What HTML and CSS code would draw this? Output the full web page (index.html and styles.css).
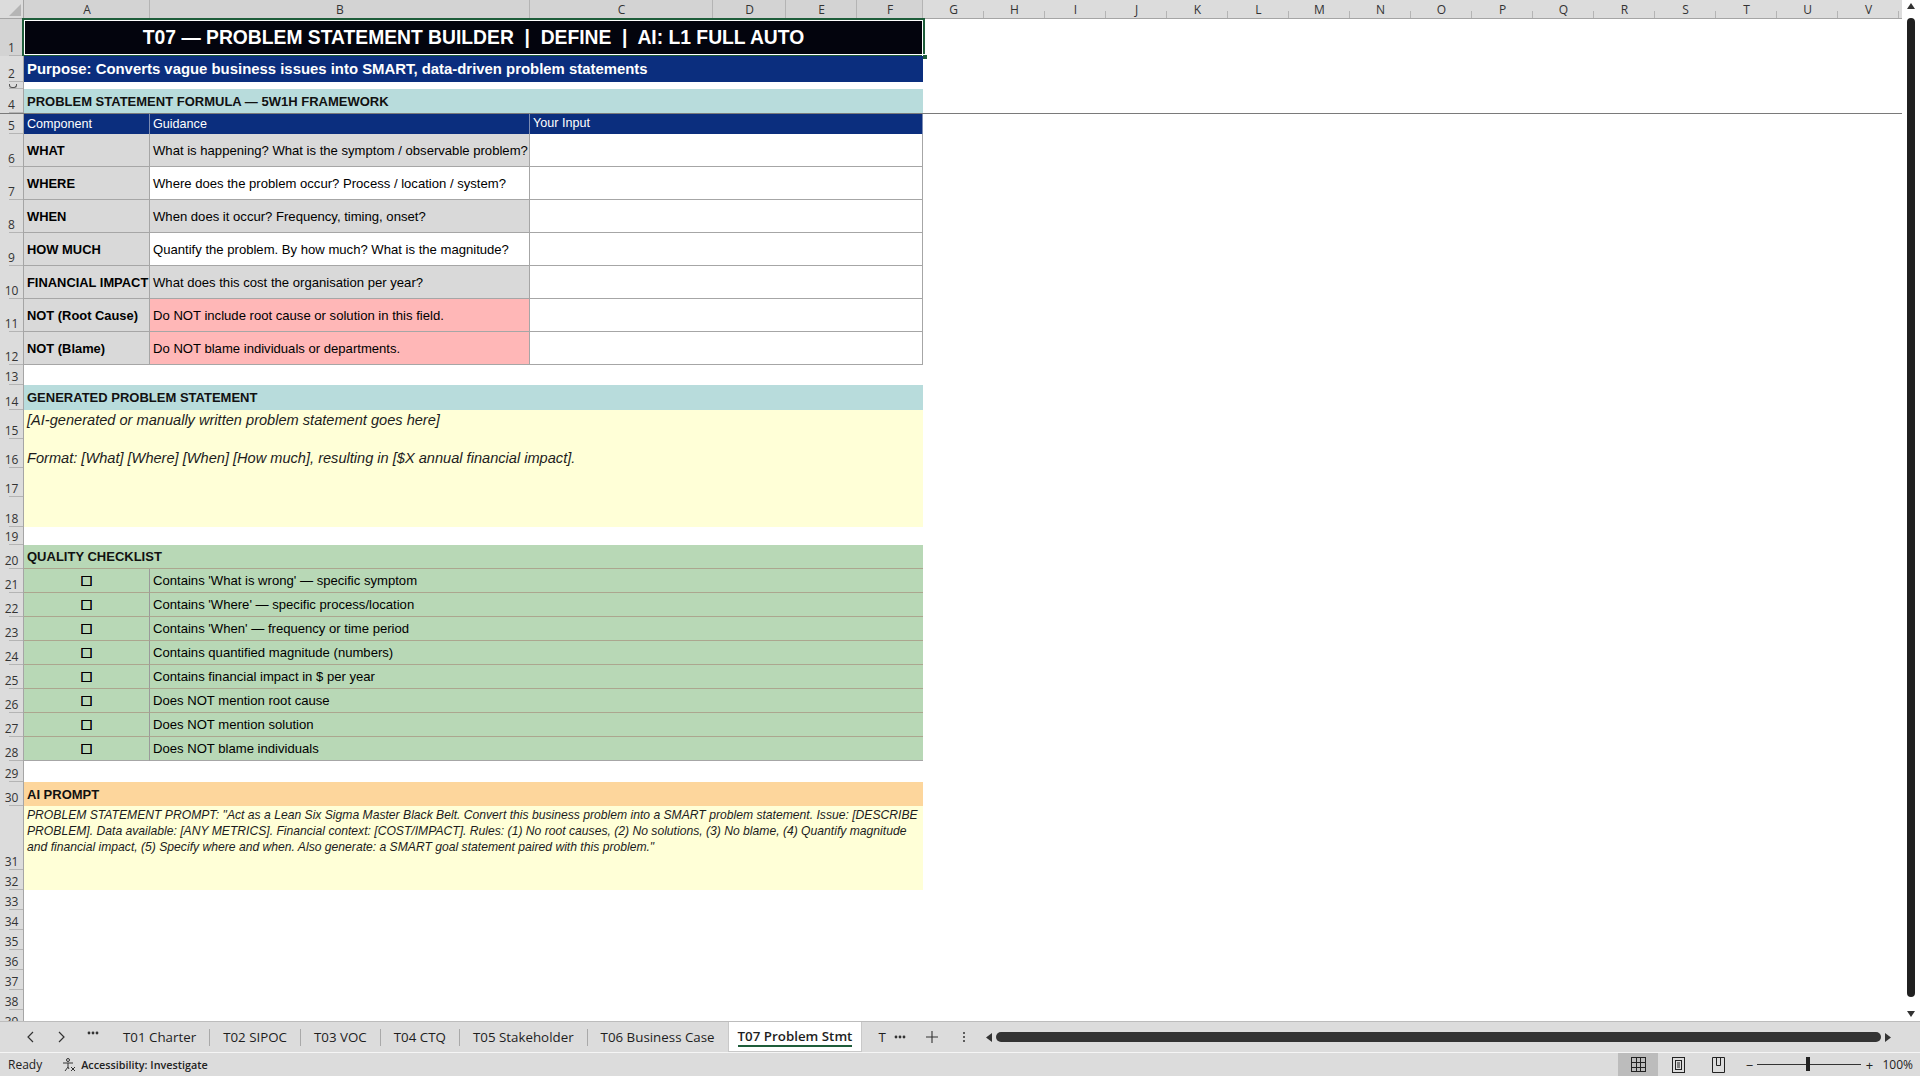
FILE: index.html
```html
<!DOCTYPE html>
<html lang="en">
<head>
  <meta charset="UTF-8" />
  <title>T07 Problem Statement Builder</title>
  <link rel="stylesheet" href="styles.css">
</head>
<body>
  <div class="app">

    <div class="sheet">
      <div class="grid">

        <div class="colheads">
          <div class="corner"><svg width="12" height="12" viewBox="0 0 12 12"><path d="M12 0v12H0z" fill="#b5b5b5"/></svg></div>
          <div class="ch w-a sel">A</div>
          <div class="ch w-b sel">B</div>
          <div class="ch w-c sel">C</div>
          <div class="ch w-d sel">D</div>
          <div class="ch w-e sel">E</div>
          <div class="ch w-f sel">F</div>
          <div class="ch w-n">G</div>
          <div class="ch w-n">H</div>
          <div class="ch w-n">I</div>
          <div class="ch w-n">J</div>
          <div class="ch w-n">K</div>
          <div class="ch w-n">L</div>
          <div class="ch w-n">M</div>
          <div class="ch w-n">N</div>
          <div class="ch w-n">O</div>
          <div class="ch w-n">P</div>
          <div class="ch w-n">Q</div>
          <div class="ch w-n">R</div>
          <div class="ch w-n">S</div>
          <div class="ch w-n">T</div>
          <div class="ch w-n">U</div>
          <div class="ch w-n">V</div>
        </div>

        <div class="row h37 selrow">
          <div class="rh sel">1</div>
          <div class="c w-af title">T07 — PROBLEM STATEMENT BUILDER &nbsp;|&nbsp; DEFINE &nbsp;|&nbsp; AI: L1 FULL AUTO</div>
          <div class="selection"><span class="handle"></span></div>
        </div>
        <div class="row h26">
          <div class="rh">2</div>
          <div class="c w-af purpose">Purpose: Converts vague business issues into SMART, data-driven problem statements</div>
        </div>
        <div class="row h7">
          <div class="rh tiny"></div>
        </div>
        <div class="row h25 freeze">
          <div class="rh">4</div>
          <div class="c w-af sec teal">PROBLEM STATEMENT FORMULA — 5W1H FRAMEWORK</div>
        </div>
        <div class="row h20">
          <div class="rh">5</div>
          <div class="c w-a th">Component</div>
          <div class="c w-b th">Guidance</div>
          <div class="c w-cf th up">Your Input</div>
        </div>

        <div class="row h33">
          <div class="rh">6</div>
          <div class="c w-a bd lbl">WHAT</div>
          <div class="c w-b bd gray">What is happening? What is the symptom / observable problem?</div>
          <div class="c w-cf bd"></div>
        </div>
        <div class="row h33">
          <div class="rh">7</div>
          <div class="c w-a bd lbl">WHERE</div>
          <div class="c w-b bd">Where does the problem occur? Process / location / system?</div>
          <div class="c w-cf bd"></div>
        </div>
        <div class="row h33">
          <div class="rh">8</div>
          <div class="c w-a bd lbl">WHEN</div>
          <div class="c w-b bd gray">When does it occur? Frequency, timing, onset?</div>
          <div class="c w-cf bd"></div>
        </div>
        <div class="row h33">
          <div class="rh">9</div>
          <div class="c w-a bd lbl">HOW MUCH</div>
          <div class="c w-b bd">Quantify the problem. By how much? What is the magnitude?</div>
          <div class="c w-cf bd"></div>
        </div>
        <div class="row h33">
          <div class="rh">10</div>
          <div class="c w-a bd lbl">FINANCIAL IMPACT</div>
          <div class="c w-b bd gray">What does this cost the organisation per year?</div>
          <div class="c w-cf bd"></div>
        </div>
        <div class="row h33">
          <div class="rh">11</div>
          <div class="c w-a bd lbl">NOT (Root Cause)</div>
          <div class="c w-b bd pink">Do NOT include root cause or solution in this field.</div>
          <div class="c w-cf bd"></div>
        </div>
        <div class="row h33">
          <div class="rh">12</div>
          <div class="c w-a bd lbl">NOT (Blame)</div>
          <div class="c w-b bd pink">Do NOT blame individuals or departments.</div>
          <div class="c w-cf bd"></div>
        </div>

        <div class="row h20">
          <div class="rh">13</div>
        </div>
        <div class="row h25">
          <div class="rh">14</div>
          <div class="c w-af sec teal">GENERATED PROBLEM STATEMENT</div>
        </div>
        <div class="block">
          <div class="rhs">
            <div class="rh h29">15</div>
            <div class="rh h29">16</div>
            <div class="rh h29">17</div>
            <div class="rh h30">18</div>
          </div>
          <div class="c w-af note">
            <div>[AI-generated or manually written problem statement goes here]</div>
            <div>&nbsp;</div>
            <div>Format: [What] [Where] [When] [How much], resulting in [$X annual financial impact].</div>
          </div>
        </div>
        <div class="row h18">
          <div class="rh">19</div>
        </div>

        <div class="row h24">
          <div class="rh">20</div>
          <div class="c w-af sec green chk">QUALITY CHECKLIST</div>
        </div>
        <div class="row h24">
          <div class="rh">21</div>
          <div class="c w-a green chk box">☐</div>
          <div class="c w-bf green chk">Contains 'What is wrong' — specific symptom</div>
        </div>
        <div class="row h24">
          <div class="rh">22</div>
          <div class="c w-a green chk box">☐</div>
          <div class="c w-bf green chk">Contains 'Where' — specific process/location</div>
        </div>
        <div class="row h24">
          <div class="rh">23</div>
          <div class="c w-a green chk box">☐</div>
          <div class="c w-bf green chk">Contains 'When' — frequency or time period</div>
        </div>
        <div class="row h24">
          <div class="rh">24</div>
          <div class="c w-a green chk box">☐</div>
          <div class="c w-bf green chk">Contains quantified magnitude (numbers)</div>
        </div>
        <div class="row h24">
          <div class="rh">25</div>
          <div class="c w-a green chk box">☐</div>
          <div class="c w-bf green chk">Contains financial impact in $ per year</div>
        </div>
        <div class="row h24">
          <div class="rh">26</div>
          <div class="c w-a green chk box">☐</div>
          <div class="c w-bf green chk">Does NOT mention root cause</div>
        </div>
        <div class="row h24">
          <div class="rh">27</div>
          <div class="c w-a green chk box">☐</div>
          <div class="c w-bf green chk">Does NOT mention solution</div>
        </div>
        <div class="row h24">
          <div class="rh">28</div>
          <div class="c w-a green chk box last">☐</div>
          <div class="c w-bf green chk last">Does NOT blame individuals</div>
        </div>

        <div class="row h21">
          <div class="rh">29</div>
        </div>
        <div class="row h24">
          <div class="rh">30</div>
          <div class="c w-af sec orange">AI PROMPT</div>
        </div>
        <div class="block">
          <div class="rhs">
            <div class="rh h64">31</div>
            <div class="rh h20">32</div>
          </div>
          <div class="c w-af prompt">PROBLEM STATEMENT PROMPT: "Act as a Lean Six Sigma Master Black Belt. Convert this business problem into a SMART problem statement. Issue: [DESCRIBE<br>PROBLEM]. Data available: [ANY METRICS]. Financial context: [COST/IMPACT]. Rules: (1) No root causes, (2) No solutions, (3) No blame, (4) Quantify magnitude<br>and financial impact, (5) Specify where and when. Also generate: a SMART goal statement paired with this problem."</div>
        </div>

        <div class="row h20"><div class="rh">33</div></div>
        <div class="row h20"><div class="rh">34</div></div>
        <div class="row h20"><div class="rh">35</div></div>
        <div class="row h20"><div class="rh">36</div></div>
        <div class="row h20"><div class="rh">37</div></div>
        <div class="row h20"><div class="rh">38</div></div>
        <div class="row h20"><div class="rh">39</div></div>
      </div>

      <div class="vscroll">
        <svg class="varrow" width="8" height="6" viewBox="0 0 8 6"><path d="M4 0L8 6H0z" fill="#333"/></svg>
        <div class="vthumb"></div>
        <svg class="varrow" width="8" height="6" viewBox="0 0 8 6"><path d="M0 0h8L4 6z" fill="#333"/></svg>
      </div>
    </div>

    <div class="tabbar">
      <div class="tabnav">
        <span class="navbtn"><svg width="7" height="12" viewBox="0 0 7 12"><path d="M6 1L1 6l5 5" fill="none" stroke="#333" stroke-width="1.2"/></svg></span>
        <span class="navbtn"><svg width="7" height="12" viewBox="0 0 7 12"><path d="M1 1l5 5-5 5" fill="none" stroke="#333" stroke-width="1.2"/></svg></span>
        <span class="navbtn"><svg width="12" height="4" viewBox="0 0 12 4"><circle cx="2" cy="2" r="1.4" fill="#333"/><circle cx="6" cy="2" r="1.4" fill="#333"/><circle cx="10" cy="2" r="1.4" fill="#333"/></svg></span>
      </div>
      <div class="tabs">
        <div class="tab">T01 Charter</div>
        <div class="tab">T02 SIPOC</div>
        <div class="tab">T03 VOC</div>
        <div class="tab">T04 CTQ</div>
        <div class="tab">T05 Stakeholder</div>
        <div class="tab">T06 Business Case</div>
        <div class="tab active"><span>T07 Problem Stmt</span></div>
        <div class="tab cut">T</div>
      </div>
      <span class="tabtool more"><svg width="12" height="4" viewBox="0 0 12 4"><circle cx="2" cy="2" r="1.4" fill="#333"/><circle cx="6" cy="2" r="1.4" fill="#333"/><circle cx="10" cy="2" r="1.4" fill="#333"/></svg></span>
      <span class="tabtool plus"><svg width="12" height="12" viewBox="0 0 12 12"><path d="M6 0v12M0 6h12" stroke="#333" stroke-width="1.1"/></svg></span>
      <span class="tabtool kebab"><svg width="4" height="12" viewBox="0 0 4 12"><circle cx="2" cy="2" r="1" fill="#333"/><circle cx="2" cy="6" r="1" fill="#333"/><circle cx="2" cy="10" r="1" fill="#333"/></svg></span>
      <div class="hscroll">
        <svg width="6" height="9" viewBox="0 0 6 9"><path d="M6 0v9L0 4.5z" fill="#333"/></svg>
        <div class="hthumb"></div>
        <svg width="6" height="9" viewBox="0 0 6 9"><path d="M0 0v9l6-4.5z" fill="#333"/></svg>
      </div>
    </div>

    <div class="statusbar">
      <span class="ready">Ready</span>
      <span class="access">
        <svg width="14" height="14" viewBox="0 0 14 14"><circle cx="6" cy="2" r="1.5" fill="none" stroke="#333"/><path d="M1 5h10M6 5v4M6 9l-3 4M6 9l1 2" fill="none" stroke="#333"/><path d="M9 9l4 4M13 9l-4 4" stroke="#333"/></svg>
        Accessibility: Investigate
      </span>
      <div class="views">
        <span class="viewbtn on"><svg width="15" height="15" viewBox="0 0 15 15"><rect x="0.5" y="0.5" width="14" height="14" fill="none" stroke="#222"/><path d="M0 5.5h15M0 10.5h15M5.5 0v15M9.5 0v15" stroke="#222"/></svg></span>
        <span class="viewbtn"><svg width="13" height="16" viewBox="0 0 13 16"><rect x="0.5" y="0.5" width="12" height="15" fill="none" stroke="#222"/><rect x="3.5" y="3.5" width="6" height="9" fill="none" stroke="#222"/><path d="M5 6h3M5 8h3M5 10h3" stroke="#222"/></svg></span>
        <span class="viewbtn"><svg width="13" height="16" viewBox="0 0 13 16"><path d="M0.5 0.5h12v15H0.5z" fill="none" stroke="#222"/><path d="M4.5 0.5v8h4v-8" fill="none" stroke="#222"/></svg></span>
      </div>
      <div class="zoomer">
        <span class="zsign">−</span>
        <div class="slider"><span class="knob"></span></div>
        <span class="zsign">+</span>
        <span class="pct">100%</span>
      </div>
    </div>

  </div>
</body>
</html>
```

FILE: styles.css
```css
* {
  box-sizing: border-box;
}

body {
  margin: 0;
  font-family: "Liberation Sans", Arial, sans-serif;
  font-size: 13.1px;
  color: #000;
  background: #fff;
  overflow: hidden;
}

.app {
  display: flex;
  flex-direction: column;
  width: 1920px;
  height: 1076px;
}

/* ---------- sheet ---------- */

.sheet {
  display: flex;
  height: 1022px;
  flex: none;
  overflow: hidden;
  border-bottom: 1px solid #bcbcbc;
}

.grid {
  width: 1902px;
  flex: none;
  overflow: hidden;
}

.colheads {
  display: flex;
  height: 19px;
  background: #dcdcdc;
  border-bottom: 1px solid #a5a5a5;
  font-family: "Open Sans", sans-serif;
  font-size: 12px;
  color: #333;
}

.corner {
  width: 24px;
  flex: none;
  display: flex;
  align-items: flex-end;
  justify-content: flex-end;
  padding: 0 2px 2px 0;
  border-right: 1px solid #a5a5a5;
}

.ch {
  flex: none;
  display: flex;
  align-items: center;
  justify-content: center;
  position: relative;
}

.ch::after {
  content: "";
  position: absolute;
  right: 0;
  bottom: 0;
  height: 7px;
  border-right: 1px solid #b4b4b4;
}

.ch.sel {
  background: #d3d3d3;
}

.ch.sel::after {
  height: 100%;
}

.w-a { width: 126px; }
.w-b { width: 380px; }
.w-c { width: 183px; }
.w-d { width: 73px; }
.w-e { width: 71px; }
.w-f { width: 66px; }
.w-n { width: 61px; }
.w-cf { width: 393px; }
.w-bf { width: 773px; }
.w-af { width: 899px; }

.row {
  display: flex;
  position: relative;
}

.h7 { height: 7px; }
.h18 { height: 18px; }
.h20 { height: 20px; }
.h21 { height: 21px; }
.h24 { height: 24px; }
.h25 { height: 25px; }
.h26 { height: 26px; }
.h29 { height: 29px; }
.h30 { height: 30px; }
.h33 { height: 33px; }
.h37 { height: 37px; }
.h64 { height: 64px; }

.rh {
  width: 24px;
  flex: none;
  position: relative;
  overflow: hidden;
  display: flex;
  align-items: flex-end;
  justify-content: center;
  padding-bottom: 1px;
  background: #dcdcdc;
  border-right: 1px solid #a5a5a5;
  font-family: "Open Sans", sans-serif;
  font-size: 12px;
  line-height: 15px;
  color: #333;
}

.rh::after {
  content: "";
  position: absolute;
  left: 9px;
  right: 0;
  bottom: 0;
  border-bottom: 1px solid #b4b4b4;
}

/* row 3 is too short to show its number: just the top of the digit */
.rh.tiny::before {
  content: "";
  position: absolute;
  left: 9px;
  top: 2px;
  width: 6px;
  height: 3px;
  border: 1px solid #555;
  border-top: none;
  border-radius: 0 0 3px 3px;
}

.rh.sel {
  background: #d3d3d3;
}

.freeze {
  border-bottom: 1px solid #7a7a7a;
}

/* ---------- cells ---------- */

.c {
  flex: none;
  display: flex;
  align-items: center;
  padding: 0 3px;
  white-space: nowrap;
  overflow: hidden;
}

.title {
  justify-content: center;
  background: #03040d;
  color: #fff;
  font-weight: bold;
  font-size: 19.3px;
}

.purpose {
  background: #0b2e7e;
  color: #fff;
  font-weight: bold;
  font-size: 14.9px;
}

.sec {
  font-weight: bold;
  font-size: 13px;
  color: #111;
}

.teal { background: #b8dcdc; }
.green { background: #b8d8b6; }
.orange { background: #fdd69c; }
.gray { background: #d9d9d9; }
.pink { background: #ffb7b7; }

.th {
  background: #0b2e7e;
  color: #fff;
  font-size: 12.6px;
  border-right: 1px solid #7d8db3;
}

.th.up {
  align-items: flex-start;
  padding-top: 2px;
}

.bd {
  border-right: 1px solid #a6a6a6;
  border-bottom: 1px solid #a6a6a6;
}

.lbl {
  background: #d9d9d9;
  font-weight: bold;
  font-size: 12.9px;
}

.chk {
  border-bottom: 1px solid #aca68f;
}

.chk.last {
  border-bottom-color: #a6a6a6;
}

.box {
  justify-content: center;
  border-right: 1px solid #9a9a9a;
  font-family: "DejaVu Sans", sans-serif;
  font-size: 14px;
  text-shadow: 0.4px 0 0 #000, 0 0.4px 0 #000;
}

.block {
  display: flex;
}

.rhs {
  display: flex;
  flex-direction: column;
}

.note {
  flex-direction: column;
  align-items: flex-start;
  padding-top: 1px;
  background: #ffffd7;
  font-style: italic;
  font-size: 14.6px;
  line-height: 19px;
  color: #1c1c1c;
}

.prompt {
  align-items: flex-start;
  white-space: normal;
  padding-top: 1px;
  background: #ffffd7;
  font-style: italic;
  font-size: 12.15px;
  line-height: 16px;
  color: #1c1c1c;
}

/* selection frame over A1:F1 */
.selection {
  position: absolute;
  left: 22px;
  top: -1px;
  width: 903px;
  height: 39px;
  border: 2px solid #1e5d3a;
  box-shadow: inset 0 0 0 1px #fff;
}

.handle {
  position: absolute;
  right: -5px;
  bottom: -5px;
  width: 6px;
  height: 6px;
  background: #1e5d3a;
  border: 1px solid #fff;
}

/* ---------- vertical scrollbar ---------- */

.vscroll {
  flex: 1;
  display: flex;
  flex-direction: column;
  align-items: center;
  padding: 3px 0 4px;
  background: #fff;
}

.vthumb {
  flex: 1;
  width: 8px;
  margin: 9px 0 14px;
  background: #202020;
  border-radius: 4px;
}

/* ---------- sheet tabs ---------- */

.tabbar {
  height: 31px;
  flex: none;
  display: flex;
  align-items: center;
  background: #dcdcdc;
  border-bottom: 1px solid #f5f5f5;
  font-family: "Open Sans", sans-serif;
  font-size: 13.33px;
  color: #1e1e1e;
}

.tabnav {
  display: flex;
  margin-left: 15px;
}

.navbtn {
  width: 31px;
  display: flex;
  justify-content: center;
}

.tabs {
  display: flex;
  align-items: center;
  height: 100%;
}

.tab {
  padding: 0 13px;
  line-height: 17px;
  border-left: 1px solid #a9a9a9;
  white-space: nowrap;
}

.tab:first-child {
  border-left: none;
  padding-left: 15px;
}

.tab.active {
  align-self: stretch;
  display: flex;
  align-items: center;
  padding: 0 9px;
  background: #fff;
  border: 1px solid #c8c8c8;
  border-top: none;
  font-weight: 600;
}

.tab.active span {
  border-bottom: 2px solid #1e5d3a;
  line-height: 18px;
}

.tab.active + .tab {
  border-left: none;
  padding-right: 0;
  padding-left: 16px;
}

.tabtool {
  width: 32px;
  display: flex;
  justify-content: center;
}

.tabtool.more {
  width: 28px;
}

.tabtool.plus {
  margin-left: 2px;
}

.tabtool.kebab {
  width: 24px;
  margin-left: 4px;
}

.hscroll {
  display: flex;
  align-items: center;
  gap: 4px;
  margin-left: 10px;
  width: 905px;
}

.hthumb {
  flex: 1;
  height: 10px;
  background: #333;
  border-radius: 5px;
}

/* ---------- status bar ---------- */

.statusbar {
  flex: 1;
  display: flex;
  align-items: center;
  background: #dcdcdc;
  font-family: "Open Sans", sans-serif;
  font-size: 12px;
  color: #222;
}

.ready {
  margin-left: 8px;
}

.access {
  display: flex;
  align-items: center;
  gap: 5px;
  margin-left: 20px;
  font-size: 10.8px;
  font-weight: 600;
}

.views {
  display: flex;
  margin-left: auto;
  align-self: stretch;
}

.viewbtn {
  width: 40px;
  display: flex;
  align-items: center;
  justify-content: center;
}

.viewbtn.on {
  background: #bcbcbc;
}

.zoomer {
  display: flex;
  align-items: center;
  margin-left: 6px;
  margin-right: 7px;
}

.zsign {
  width: 10px;
  text-align: center;
  font-size: 13px;
}

.slider {
  position: relative;
  width: 104px;
  height: 1px;
  margin: 0 3px;
  background: #333;
}

.knob {
  position: absolute;
  left: 49px;
  top: -7px;
  width: 4px;
  height: 14px;
  background: #222;
}

.pct {
  margin-left: 8px;
}
```
